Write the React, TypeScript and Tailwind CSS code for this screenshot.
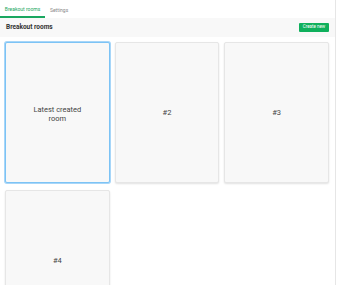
import React from "react";

const rooms = ["Latest created room", "#2", "#3", "#4"];

export default function App() {
  return (
    <div className="w-[338px] h-[285px] overflow-hidden bg-white flex" style={{ fontFamily: "Roboto, 'Liberation Sans', sans-serif" }}>
      <div className="w-[336px] shrink-0 border-r border-[#e6e6e6] flex flex-col">
        {/* Tabs */}
        <div className="flex h-[18px] shrink-0 items-end">
          <div className="w-[45px] h-[18px] flex items-center justify-center text-[5px] text-[#1aa760] border-b-2 border-[#1aa760] pt-[4px]">
            Breakout rooms
          </div>
          <div className="ml-[5px] h-[18px] flex items-center text-[5px] text-[#888] pt-[3px]">Settings</div>
        </div>
        {/* Header */}
        <div className="h-[19px] shrink-0 bg-[#f8f8f8] flex items-center justify-between pl-[6px] pr-[6px]">
          <span className="text-[6.5px] font-bold text-[#333]">Breakout rooms</span>
          <button className="h-[9px] w-[30px] rounded-[1px] bg-[#0fb05c] text-white text-[4.5px] flex items-center justify-center">
            Create new
          </button>
        </div>
        {/* Rooms */}
        <div className="grid grid-cols-3 gap-x-[5px] gap-y-[7px] pl-[5px] pr-[6px] pt-[5px] shrink-0">
          {rooms.map((r, i) => (
            <div
              key={r}
              className={
                i === 0
                  ? "h-[141px] rounded-[2px] bg-[#f8f8f8] border border-[#7cc3f5] shadow-[0_0_0_1px_#a8d6f8] flex items-center justify-center text-center pt-[3px]"
                  : "h-[141px] rounded-[2px] bg-[#f8f8f8] border border-[#e6e6e6] shadow-[0_1px_2px_rgba(0,0,0,0.12)] flex items-center justify-center text-center"
              }
            >
              <span className={i === 0 ? "text-[7.5px] leading-[9px] text-[#444] w-[48px]" : "text-[7.5px] text-[#444]"}>{r}</span>
            </div>
          ))}
        </div>
      </div>
    </div>
  );
}
